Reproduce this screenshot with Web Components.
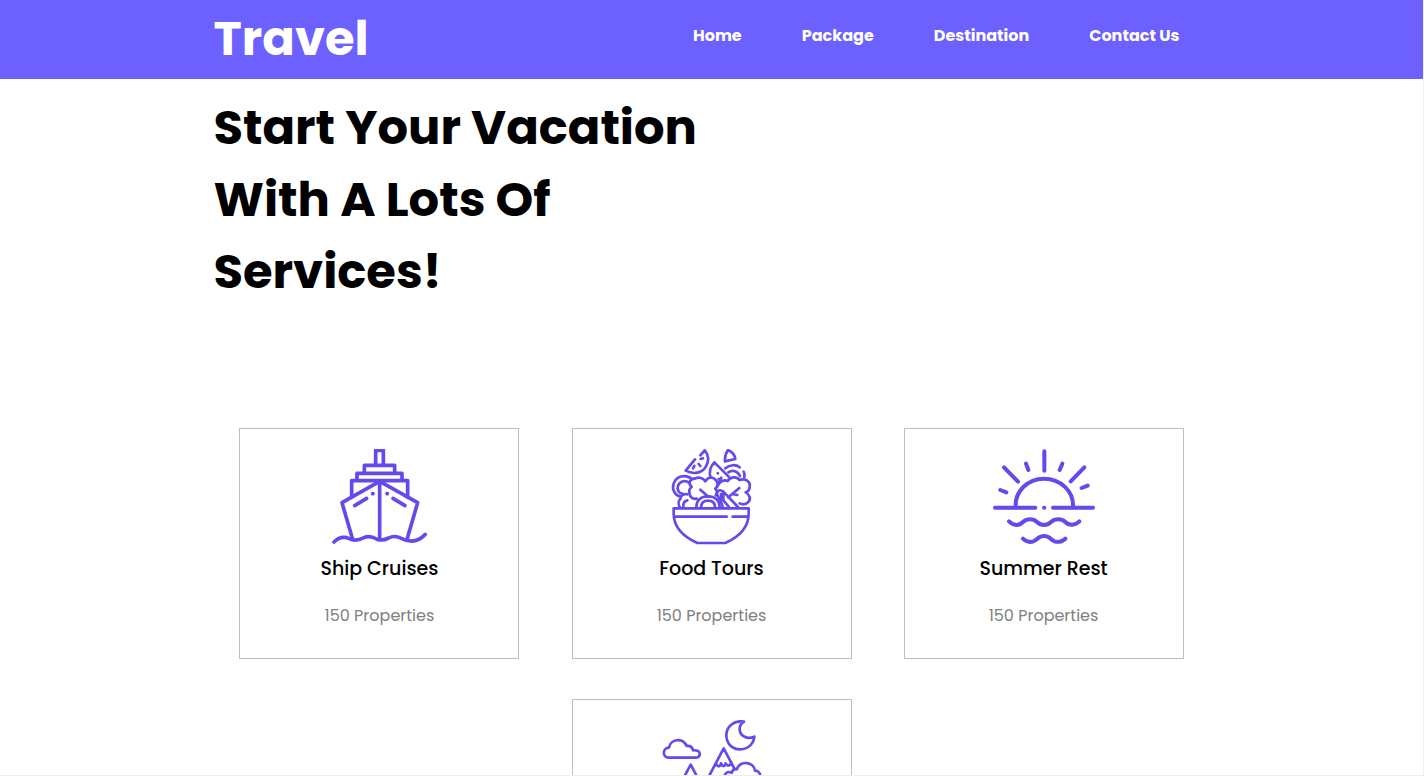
<!DOCTYPE html>
<html lang="en">
<head>
<meta charset="utf-8">
<meta name="viewport" content="width=device-width, initial-scale=1">
<title>Travel</title>
<style>
  html, body { margin: 0; height: 100%; }
  body { font-family: Poppins, Inter, sans-serif; color: #000; background: #fff; overflow: hidden; }
</style>
</head>
<body>
<travel-page>
  <site-header slot="header">
    <a href="#home">Home</a>
    <a href="#package">Package</a>
    <a href="#destination">Destination</a>
    <a href="#contact">Contact Us</a>
  </site-header>
  <page-intro>Start Your Vacation With A Lots Of Services!</page-intro>
  <service-list>
    <service-card>
      <service-icon slot="icon" name="ship"></service-icon>
      <span slot="title">Ship Cruises</span>
      <span slot="count">150 Properties</span>
    </service-card>
    <service-card>
      <service-icon slot="icon" name="food"></service-icon>
      <span slot="title">Food Tours</span>
      <span slot="count">150 Properties</span>
    </service-card>
    <service-card>
      <service-icon slot="icon" name="summer"></service-icon>
      <span slot="title">Summer Rest</span>
      <span slot="count">150 Properties</span>
    </service-card>
    <service-card>
      <service-icon slot="icon" name="mountain"></service-icon>
    </service-card>
  </service-list>
</travel-page>

<script>
const mount = (el, html) => {
  const t = document.createElement('template');
  t.innerHTML = html;
  el.attachShadow({ mode: 'open' }).append(t.content.cloneNode(true));
};

customElements.define('travel-page', class extends HTMLElement {
  constructor() {
    super();
    mount(this, `<style>
      :host { display: block; box-sizing: border-box; height: 100vh; overflow-y: auto; scrollbar-width: none;
        border-right: 1px solid #f0f0f0; border-bottom: 1px solid #ededed; }
      main { width: 70%; margin: 0 auto; padding-bottom: 40px; }
    </style>
    <slot name="header"></slot>
    <main><slot></slot></main>`);
  }
});

customElements.define('site-header', class extends HTMLElement {
  constructor() {
    super();
    mount(this, `<style>
      :host { display: block; background: #6c60ff; color: #fff; }
      header { width: 70%; margin: 0 auto; display: flex; justify-content: space-between; align-items: flex-start; }
      .logo { font-size: 48px; font-weight: 700; line-height: 72px; padding: 3px 0 4px; }
      nav { display: flex; gap: 60px; padding: 24px 30px 0 0; font-size: 16px; font-weight: 700; line-height: 24px; }
      ::slotted(a) { color: inherit; text-decoration: none; }
    </style>
    <header><div class="logo">Travel</div><nav><slot></slot></nav></header>`);
  }
});

customElements.define('page-intro', class extends HTMLElement {
  constructor() {
    super();
    mount(this, `<style>
      :host { display: block; padding: 13px 0 120px; }
      h1 { margin: 0; width: 50%; font-size: 48px; font-weight: 700; line-height: 72px; }
    </style>
    <h1><slot></slot></h1>`);
  }
});

customElements.define('service-list', class extends HTMLElement {
  constructor() {
    super();
    mount(this, `<style>
      :host { display: flex; flex-wrap: wrap; justify-content: space-around; row-gap: 40px; }
    </style><slot></slot>`);
  }
});

customElements.define('service-card', class extends HTMLElement {
  constructor() {
    super();
    mount(this, `<style>
      :host { display: flex; flex-direction: column; align-items: center; box-sizing: border-box;
        width: 280px; min-height: 231px; padding: 20px 0 30px; border: 1px solid #bebebe; text-align: center; }
      h2 { margin: 9px 0 20px; font-size: 19px; font-weight: 500; line-height: 30px; }
      p { margin: 0; font-size: 16px; line-height: 24px; color: #808080; }
    </style>
    <slot name="icon"></slot>
    <h2><slot name="title"></slot></h2>
    <p><slot name="count"></slot></p>`);
  }
});

const ICONS = {
  ship: ['9 27 306 288', 11, `
    <path d="M152 72V31h23v41M118 96V76h91v20M96 119v-19h135v19M80 172v-50h168v50"/>
    <path d="M164 124L51 188l31 107M164 124l114 64-31 107M164 124v172"/>
    <path d="M89 197l36-22M240 197l-36-22"/>
    <path d="M143 161h1M186 161h1"/>
    <path d="M27 306c14-14 30-17 46-10 17 9 30 4 44-3 13-6 25-3 38 4 13 6 24 3 36-3 13-7 24-6 38 1 29 15 54 8 72-12"/>`],
  food: ['3 27 306 288', 8, `
    <path d="M41 205h225v16c0 36-22 66-70 88h-84c-48-22-71-52-71-88zM46 230h154M218 230h43"/>
    <path d="M134 31c12 12 14 32 4 48-11 20-37 26-61 13M134 31l-13 15M105 58L77 92M103 78l-4 7M116 72l5 6M122 57l7-2"/>
    <path d="M204 30c-7 10-10 22-9 34l31-7c-2-13-10-22-22-27z"/>
    <path d="M163 67c-13 14-16 31-11 46M163 67l43 43M173 100h1M176 117h1M184 113l-7 14"/>
    <path d="M196 85c14-12 32-12 43-3M205 97c13-9 28-4 35 11M251 95c3 5 3 11 2 17"/>
    <path d="M92 114c-19-12-42-4-50 14-8 20 2 38 20 42M87 128c-13-9-28-4-33 9-4 12 3 23 13 24"/>
    <path d="M82 163c-10-3-20 3-21 14-7 6-6 17-2 24M82 181c-9 2-13 10-12 20"/>
    <path d="M110 176c-11 2-20-4-21-14-3-9 0-17 6-21-12-12-6-25 12-26 10-5 23-1 29 9 8-14 22-16 33-2 6 8 5 18-3 24 6 7 6 14 1 20M121 149l24 21"/>
    <path d="M109 202c0-22 15-33 35-33s35 11 35 33M123 202c1-14 9-20 21-20s21 6 21 20"/>
    <path d="M170 163c2-12 10-16 20-8l44 46M172 165c8 15 14 25 16 36M190 155v26l17 20M183 162c0 12 2 15 7 19"/>
    <path d="M174 136c5-13 18-18 29-13 7-12 26-16 35-3 18-6 34 4 31 20 0 8-5 14-12 17 12 6 17 20 8 29-7 7-18 8-26 4M238 144l-33 28M217 162l15 3"/>`],
  summer: ['24 27 306 288', 12, `
    <path d="M92 202c-3-48 36-86 85-86s90 37 87 86"/>
    <path d="M30 203h121M204 203h120M177 203h1"/>
    <path d="M178 34v58M57 82l42 43M298 82l-41 42M123 71l7 19M232 71l-8 19M46 150l18 7M308 137l-18 7"/>
    <path d="M72 244c14 14 30 14 42 2 12-11 30-11 42 0 12 12 30 12 42 0 12-11 31-11 43 0 12 12 30 10 42-2M114 296c13 13 29 13 42 1 12-12 30-12 42 0 13 12 30 11 43-1"/>`],
  mountain: ['303 90 306 288', 8, `
    <path d="M326 203c-19-1-20-29 1-30 3-24 40-34 53-5 10-1 17 4 19 13 26-2 25 21 9 22z"/>
    <path d="M552 95c-29-6-53 15-53 41 0 25 18 42 41 42 25 0 41-17 43-38-20 9-43-1-44-21-1-9 4-18 13-24z"/>
    <path d="M414 321L491 175l77 146M468 218c2 14 12 14 15 2 5 11 12 10 14 0 5 10 14 9 17-4"/>
    <path d="M340 321l52-97 52 97"/>
    <path fill="#fff" d="M495 254c3-8 11-10 20-6 3-9 8-12 15-10 13-29 52-22 55 4 10 0 17 8 16 21"/>`]
};

customElements.define('service-icon', class extends HTMLElement {
  constructor() {
    super();
    const [box, width, shapes] = ICONS[this.getAttribute('name')];
    mount(this, `<style>
      :host { display: block; }
      svg { display: block; width: 102px; height: 96px; fill: none; stroke: #624aec; stroke-linecap: round; stroke-linejoin: round; }
    </style>
    <svg viewBox="${box}" stroke-width="${width}" aria-hidden="true">${shapes}</svg>`);
  }
});
</script>
</body>
</html>
